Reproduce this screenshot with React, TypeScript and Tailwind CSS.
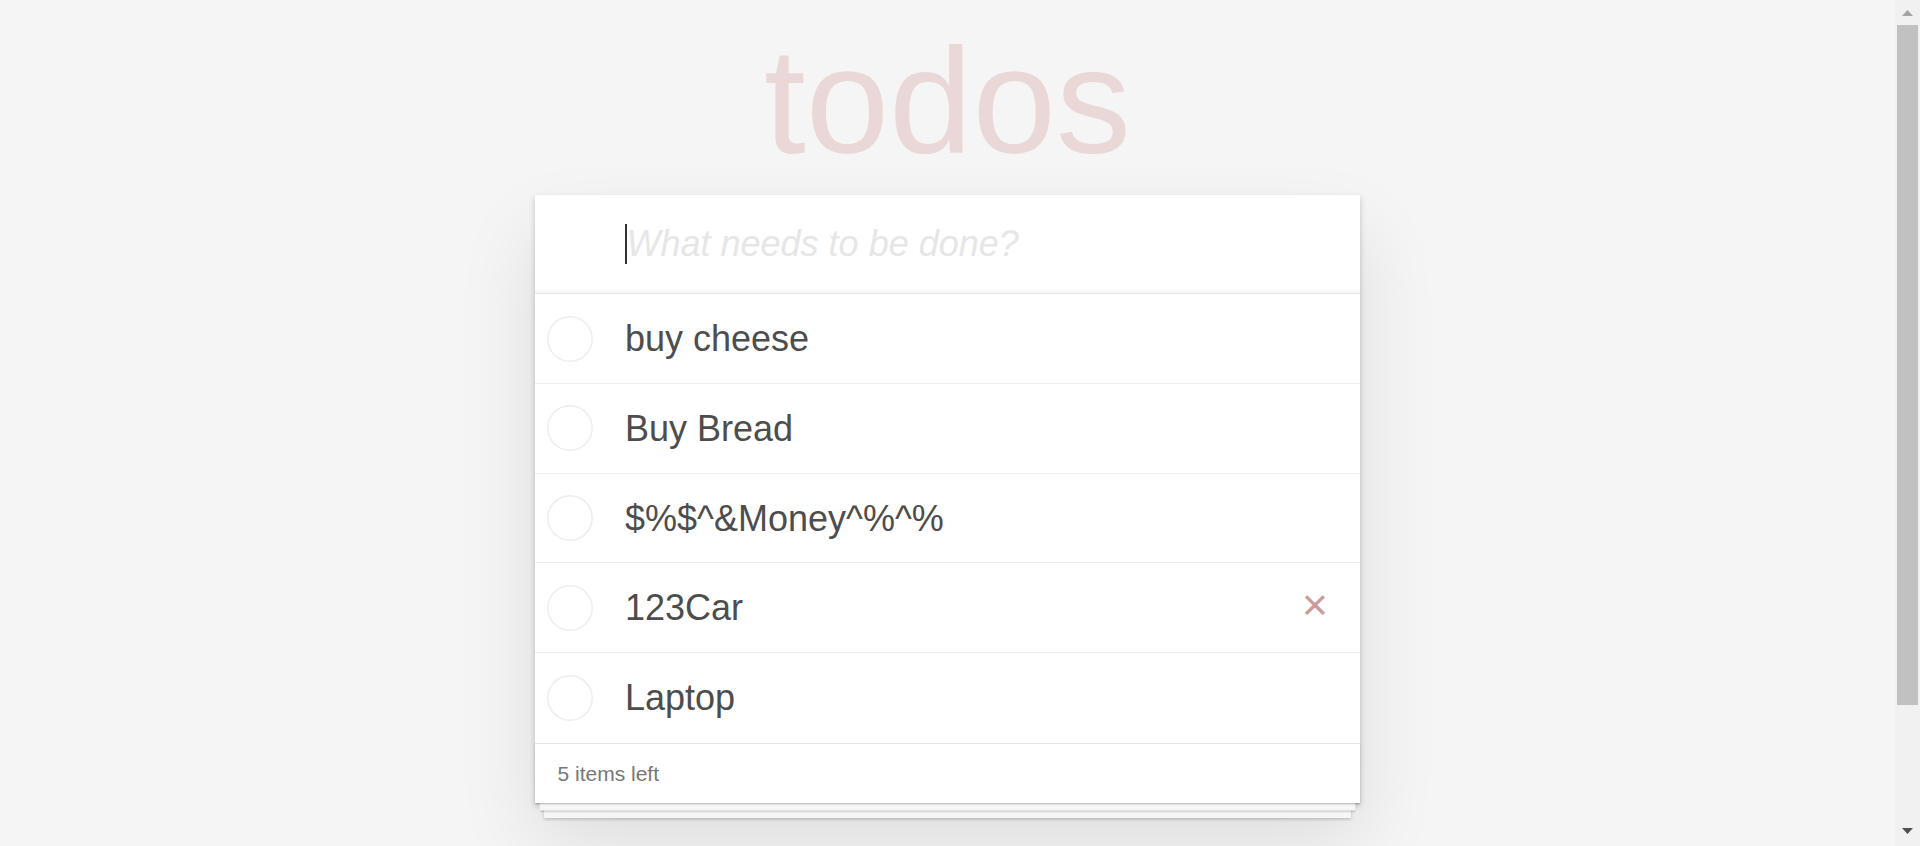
import React from "react";

const todos = ["buy cheese", "Buy Bread", "$%$^&Money^%^%", "123Car", "Laptop"];

function Circle() {
  return (
    <svg width="46" height="46" viewBox="0 0 46 46" className="block">
      <circle cx="23" cy="23" r="22.2" fill="none" stroke="#ededed" strokeWidth="1.4" />
    </svg>
  );
}

export default function App() {
  return (
    <div className="flex h-[846px] w-full overflow-hidden bg-[#f5f5f5] font-['Liberation_Sans',Arial,sans-serif]">
      <div className="flex-1 flex flex-col items-center">
        <div className="h-[195px] w-full">
          <h1 className="pt-[26px] text-center text-[150px] leading-[150px] font-normal text-[rgba(175,47,47,0.15)]">
            todos
          </h1>
        </div>
        <div className="w-[825px] bg-white shadow-[0_3px_6px_0_rgba(0,0,0,0.2),0_37.5px_75px_0_rgba(0,0,0,0.1)]">
          <div className="flex h-[98.4px] items-center pl-[90px] shadow-[inset_0_-3px_1.5px_rgba(0,0,0,0.03)]">
            <span className="block h-[40px] w-[1.5px] bg-[#333]" />
            <span className="text-[36px] leading-[50.4px] italic text-[#e6e6e6]">What needs to be done?</span>
          </div>
          <ul className="border-t border-[#e6e6e6]">
            {todos.map((t, i) => (
              <li
                key={t}
                className={
                  "flex h-[89.7px] items-center " +
                  (i < todos.length - 1 ? "border-b border-[#ededed]" : "h-[88.7px]")
                }
              >
                <div className="w-[90px] shrink-0 pl-[11.5px]">
                  <Circle />
                </div>
                <span className="flex-1 text-[36px] leading-[43.2px] text-[#4d4d4d]">{t}</span>
                {t === "123Car" && (
                  <span className="mr-[15px] flex h-[60px] w-[60px] items-center justify-center pb-[6px] text-[45px] leading-none text-[#cc9a9a]">
                    ×
                  </span>
                )}
              </li>
            ))}
          </ul>
          <div className="flex h-[60.5px] items-center border-t border-[#e6e6e6] px-[22.5px] text-[21px] leading-[30px] text-[#777] shadow-[0_1.5px_1.5px_rgba(0,0,0,0.2),0_12px_0_-4.5px_#f6f6f6,0_13.5px_1.5px_-4.5px_rgba(0,0,0,0.2),0_24px_0_-9px_#f6f6f6,0_25.5px_3px_-9px_rgba(0,0,0,0.2)]">
            <span>5 items left</span>
          </div>
        </div>
      </div>
      <div className="flex w-[25px] shrink-0 flex-col bg-[#f1f1f1]">
        <div className="flex h-[24.5px] items-start justify-center pt-[9.5px]">
          <svg width="11" height="6" viewBox="0 0 11 6" className="block">
            <polygon points="5.5,0 11,6 0,6" fill="#a3a3a3" />
          </svg>
        </div>
        <div className="mx-[2px] h-[680.5px] bg-[#c1c1c1]" />
        <div className="flex-1" />
        <div className="flex h-[24px] items-start justify-center pt-[6px]">
          <svg width="11" height="6" viewBox="0 0 11 6" className="block">
            <polygon points="0,0 11,0 5.5,6" fill="#505050" />
          </svg>
        </div>
      </div>
    </div>
  );
}
